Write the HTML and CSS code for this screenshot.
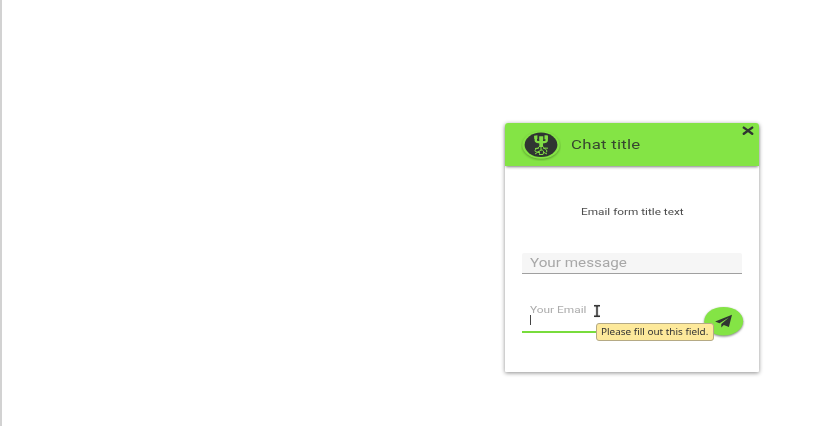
FILE: index.html
```html
<!DOCTYPE html>
<html lang="en">
<head>
<meta charset="utf-8">
<title>Chat</title>
<link rel="stylesheet" href="styles.css">
</head>
<body>
<main class="page">
  <section class="chat">
    <header class="chat-header">
      <svg class="avatar" viewBox="0 0 40 32">
        <ellipse class="avatar-ring" cx="20" cy="16" rx="18.8" ry="13.8"/>
        <ellipse class="avatar-disc" cx="20" cy="15.8" rx="16.4" ry="12.2"/>
        <path class="avatar-figure" d="M14.8 7V11.4q0 1.8 5 1.8M25.7 7V11.4q0 1.8-5 1.8"/>
        <path class="avatar-figure-fill" d="M13 6.800l3.400-.5v3.800h-3zM23.500 6.300h3.200v4h-3.200zM18.200 7.200h4v3.500h-4zM18.300 10.500h3.700v7.500h-3.700z"/>
        <path class="avatar-roots" d="M19 17q-2 3-5 2.500M21 17q2 3 6 2.200M18 19q-5 .8-3.700 3.500 2 1.500 4-.5M22 19q5 1.500 3.500 4.300M20 18v3q-3 1-1.500 3.500M20 21q4 0 2 4.500h-4M14 25q3-3 5-1M22 23l4 2"/>
      </svg>
      <h1 class="chat-title">Chat title</h1>
      <svg class="close" viewBox="0 0 12 10"><path d="M1.800 1.600 10.200 7.800M10.200 1.600 1.800 7.800"/></svg>
    </header>
    <form class="chat-form">
      <p class="form-title"><span>Email form title text</span></p>
      <div class="message"><span>Your message</span></div>
      <div class="email-row">
        <div class="email"><span class="email-label">Your Email</span><i class="caret"></i></div>
        <svg class="send" viewBox="0 0 40 30">
          <ellipse cx="20" cy="15" rx="19.500" ry="14.300"/>
          <path d="M28.300 8.600 11.400 15.400l4.400 1.600 9.400-5.800-7.600 6.600v3.400l2.500-2.500 5.100 2z"/>
        </svg>
      </div>
    </form>
  </section>
  <svg class="pointer" viewBox="0 0 8 14"><path class="pointer-halo" d="M1.500 2h5M1.500 12h5M4 2v10"/><path class="pointer-ink" d="M1 1.800h2.200L4 2.600l.8-.8H7M1 12.200h2.200l.8-.8.8.8H7M4 2.500v9"/></svg>
  <div class="tooltip"><span>Please fill out this field.</span></div>
</main>
</body>
</html>
```
FILE: styles.css
```css
* { box-sizing: border-box; }
body { margin: 0; background: #fff; font-family: Roboto, sans-serif; }
.page {
  position: relative;
  width: 834px;
  height: 426px;
  padding: 123px 0 0 503px;
  border-left: 2px solid #d2d2d2;
  overflow: hidden;
}
.chat {
  width: 254px;
  height: 249px;
  background: #fff;
  border-radius: 3px 3px 1px 1px;
  box-shadow: 0 1px 4px rgba(0,0,0,.45);
}
.chat-header {
  position: relative;
  display: flex;
  align-items: center;
  height: 43px;
  padding-left: 16px;
  background: #84e445;
  border-radius: 3px 3px 0 0;
  box-shadow: 0 2px 3px -1px rgba(0,0,0,.5);
}
.avatar { width: 40px; height: 32px; }
.avatar-ring { fill: #84e445; filter: drop-shadow(0 1px 1px rgba(0,0,0,.3)); }
.avatar-disc { fill: #303532; }
.avatar-figure { fill: none; stroke: #80dc44; stroke-width: 2.4; }
.avatar-figure-fill { fill: #80dc44; }
.avatar-roots { fill: none; stroke: #80dc44; stroke-width: 1; }
.chat-title {
  margin: 0 0 0 10px;
  color: #37472f;
  font-size: 13px;
  font-weight: 400;
  line-height: 20px;
  letter-spacing: .2px;
  white-space: nowrap;
  transform: scaleX(1.29);
  transform-origin: left;
}
.close {
  position: absolute;
  top: 3px;
  right: 5px;
  width: 12px;
  height: 10px;
  fill: none;
  stroke: #303532;
  stroke-width: 2.4;
  stroke-linecap: round;
}
.chat-form { padding: 38px 17px 0; }
.form-title {
  margin: 0 0 33px;
  padding-left: 1px;
  color: #4c4c4c;
  font-size: 9.5px;
  line-height: 16px;
  text-align: center;
}
.form-title span, .message span, .tooltip span {
  display: inline-block;
  white-space: nowrap;
}
.form-title span { transform: scaleX(1.24); }
.message {
  height: 21px;
  padding-left: 8px;
  background: #f6f6f6;
  border-bottom: 1px solid #a0a0a0;
  border-radius: 2px 2px 0 0;
  color: #a8a8a8;
  font-size: 12px;
  line-height: 21px;
}
.message span { transform: scaleX(1.27); transform-origin: left; }
.email-row { display: flex; margin-top: 27px; }
.email {
  width: 182px;
  height: 32px;
  padding-left: 8px;
  border-bottom: 2px solid #78dc3c;
}
.email-label {
  display: block;
  height: 14px;
  color: #acacac;
  font-size: 9.5px;
  line-height: 17px;
  white-space: nowrap;
  transform: scaleX(1.25);
  transform-origin: left;
}
.caret { display: block; width: 1px; height: 10px; background: #444; }
.send {
  flex: none;
  width: 40px;
  height: 30px;
  margin: 5px 0 0;
  transform: translate(1.7px, .2px);
  overflow: visible;
}
.send ellipse { fill: #84e445; filter: drop-shadow(0 1px 1.2px rgba(0,0,0,.5)); }
.send path { fill: #303532; }
.pointer { position: absolute; left: 591px; top: 304px; width: 8px; height: 14px; fill: none; }
.pointer-halo { stroke: #ddd; stroke-width: 3; }
.pointer-ink { stroke: #333; stroke-width: 1.5; }
.tooltip {
  position: absolute;
  left: 594px;
  top: 323px;
  width: 118px;
  height: 18px;
  padding-left: 4px;
  background: #fde99b;
  border: 1px solid #b5aa85;
  border-radius: 3px;
  color: #333;
  font: 9px/16px "Noto Sans", sans-serif;
}
.tooltip span { transform: scaleX(1.105); transform-origin: left; }
```
